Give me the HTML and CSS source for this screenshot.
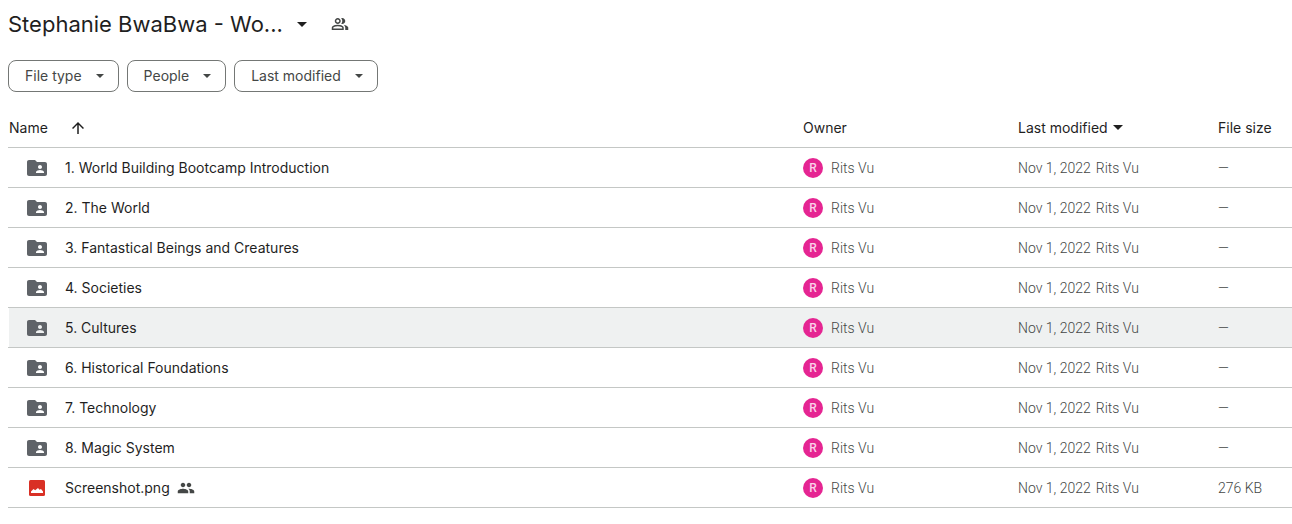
FILE: index.html
```html
<!DOCTYPE html>
<html lang="en">
<head>
<meta charset="utf-8">
<title>Stephanie BwaBwa</title>
<link rel="stylesheet" href="styles.css">
</head>
<body>
<svg class="sprite" aria-hidden="true">
  <symbol id="caret" viewBox="0 0 10 5"><path d="M0 0l5 5 5-5z"/></symbol>
  <symbol id="folder" viewBox="2 4 20 16"><path d="M20 6h-8l-2-2H4c-1.1 0-1.99.9-1.99 2L2 18c0 1.1.9 2 2 2h16c1.1 0 2-.9 2-2V8c0-1.1-.9-2-2-2zm-5 3c1.1 0 2 .9 2 2s-.9 2-2 2-2-.9-2-2 .9-2 2-2zm4 8h-8v-1c0-1.33 2.67-2 4-2s4 .67 4 2v1z"/></symbol>
</svg>
<header class="titlebar">
  <button class="title" type="button"><span>Stephanie BwaBwa - Wo...</span><svg class="caret-title"><use href="#caret"/></svg></button>
  <button class="share" type="button" aria-label="Shared">
    <svg class="people" viewBox="0 -960 960 960"><path d="M40-160v-112q0-34 17.500-62.500T104-378q62-31 126-46.500T360-440q66 0 130 15.500T616-378q29 15 46.500 43.500T680-272v112H40Zm720 0v-120q0-44-24.500-84.500T666-434q51 6 96 20.500t84 35.500q36 20 55 44.500t19 53.500v120H760ZM360-480q-66 0-113-47t-47-113q0-66 47-113t113-47q66 0 113 47t47 113q0 66-47 113t-113 47Zm400-160q0 66-47 113t-113 47q-11 0-28-2.500t-28-5.500q27-32 41.500-71t14.500-81q0-42-14.500-81T544-792q14-5 28-6.500t28-1.500q66 0 113 47t47 113ZM120-240h480v-32q0-11-5.500-20T580-306q-54-27-109-40.500T360-360q-56 0-111 13.500T140-306q-9 5-14.500 14t-5.500 20v32Zm240-320q33 0 56.500-23.500T440-640q0-33-23.500-56.500T360-720q-33 0-56.500 23.500T280-640q0 33 23.500 56.500T360-560Z"/></svg>
  </button>
</header>
<div class="filters">
  <button class="chip" type="button">File type<svg class="caret-chip"><use href="#caret"/></svg></button>
  <button class="chip" type="button">People<svg class="caret-chip"><use href="#caret"/></svg></button>
  <button class="chip" type="button">Last modified<svg class="caret-chip"><use href="#caret"/></svg></button>
</div>
<table class="files">
  <colgroup><col><col class="col-owner"><col class="col-modified"><col class="col-size"></colgroup>
  <thead>
    <tr>
      <th scope="col"><button class="sort sort-name" type="button">Name<svg class="arrow" viewBox="4 4 16 16"><path d="M4 12l1.410 1.410L11 7.830V20h2V7.830l5.580 5.590L20 12l-8-8-8 8z"/></svg></button></th>
      <th scope="col">Owner</th>
      <th scope="col"><button class="sort" type="button">Last modified<svg class="caret-head"><use href="#caret"/></svg></button></th>
      <th scope="col">File size</th>
    </tr>
  </thead>
  <tbody>
    <tr><td><div class="name"><svg class="folder"><use href="#folder"/></svg>1. World Building Bootcamp Introduction</div></td><td><div class="owner"><span class="avatar">R</span>Rits Vu</div></td><td><div class="modified"><span>Nov 1, 2022</span><span>Rits Vu</span></div></td><td>—</td></tr>
    <tr><td><div class="name"><svg class="folder"><use href="#folder"/></svg>2. The World</div></td><td><div class="owner"><span class="avatar">R</span>Rits Vu</div></td><td><div class="modified"><span>Nov 1, 2022</span><span>Rits Vu</span></div></td><td>—</td></tr>
    <tr><td><div class="name"><svg class="folder"><use href="#folder"/></svg>3. Fantastical Beings and Creatures</div></td><td><div class="owner"><span class="avatar">R</span>Rits Vu</div></td><td><div class="modified"><span>Nov 1, 2022</span><span>Rits Vu</span></div></td><td>—</td></tr>
    <tr><td><div class="name"><svg class="folder"><use href="#folder"/></svg>4. Societies</div></td><td><div class="owner"><span class="avatar">R</span>Rits Vu</div></td><td><div class="modified"><span>Nov 1, 2022</span><span>Rits Vu</span></div></td><td>—</td></tr>
    <tr class="active"><td><div class="name"><svg class="folder"><use href="#folder"/></svg>5. Cultures</div></td><td><div class="owner"><span class="avatar">R</span>Rits Vu</div></td><td><div class="modified"><span>Nov 1, 2022</span><span>Rits Vu</span></div></td><td>—</td></tr>
    <tr><td><div class="name"><svg class="folder"><use href="#folder"/></svg>6. Historical Foundations</div></td><td><div class="owner"><span class="avatar">R</span>Rits Vu</div></td><td><div class="modified"><span>Nov 1, 2022</span><span>Rits Vu</span></div></td><td>—</td></tr>
    <tr><td><div class="name"><svg class="folder"><use href="#folder"/></svg>7. Technology</div></td><td><div class="owner"><span class="avatar">R</span>Rits Vu</div></td><td><div class="modified"><span>Nov 1, 2022</span><span>Rits Vu</span></div></td><td>—</td></tr>
    <tr><td><div class="name"><svg class="folder"><use href="#folder"/></svg>8. Magic System</div></td><td><div class="owner"><span class="avatar">R</span>Rits Vu</div></td><td><div class="modified"><span>Nov 1, 2022</span><span>Rits Vu</span></div></td><td>—</td></tr>
    <tr><td><div class="name"><svg class="image" viewBox="-2 0 20 16"><rect width="16" height="16" rx="1.500" fill="#d93025"/><path d="M2 13v-1.500L4.500 9l1.700 1.200L9 8l1.500 1.800L12 9l2 2.500V13z" fill="#fff"/></svg>Screenshot.png<svg class="people" viewBox="0 0 24 24"><path d="M16 11c1.660 0 2.990-1.340 2.990-3S17.660 5 16 5s-3 1.340-3 3 1.340 3 3 3zm-8 0c1.660 0 2.990-1.340 2.990-3S9.660 5 8 5 5 6.340 5 8s1.340 3 3 3zm0 2c-2.330 0-7 1.170-7 3.500V19h14v-2.500c0-2.330-4.670-3.500-7-3.500zm8 0c-.29 0-.62.02-.97.05 1.160.84 1.970 1.970 1.970 3.450V19h6v-2.500c0-2.330-4.670-3.500-7-3.500z"/></svg></div></td><td><div class="owner"><span class="avatar">R</span>Rits Vu</div></td><td><div class="modified"><span>Nov 1, 2022</span><span>Rits Vu</span></div></td><td>276 KB</td></tr>
  </tbody>
</table>
</body>
</html>
```
FILE: styles.css
```css
* { box-sizing: border-box; }
body {
  margin: 0;
  padding: 8px 0 0 8px;
  background: #fff;
  color: #1f1f1f;
  font: 14px/20px Inter, Roboto, sans-serif;
}
svg { display: block; flex: none; fill: currentColor; }
button {
  margin: 0;
  padding: 0;
  border: 0;
  background: none;
  color: inherit;
  font: inherit;
  cursor: pointer;
}
.sprite { position: absolute; width: 0; height: 0; }

.titlebar { display: flex; align-items: center; gap: 24px; height: 32px; }
.title { display: flex; align-items: center; gap: 14px; font-size: 22px; line-height: 32px; }
.caret-title { width: 10px; height: 5px; }
.share { color: #444746; }
.people { width: 18px; height: 18px; color: #444746; }

.filters { display: flex; gap: 8px; margin: 20px 0 16px; }
.chip {
  display: flex;
  align-items: center;
  gap: 14px;
  height: 32px;
  padding: 0 14px 0 16px;
  border: 1px solid #747775;
  border-radius: 8px;
  color: #444746;
}
.caret-chip { width: 8px; height: 4px; }

.files { width: 100%; table-layout: fixed; border-collapse: separate; border-spacing: 0; }
.col-owner { width: 215px; }
.col-modified { width: 200px; }
.col-size { width: 75px; }
th, td {
  height: 40px;
  padding: 0 0 0 1px;
  border-bottom: 1px solid #c4c7c5;
  text-align: left;
  white-space: nowrap;
  vertical-align: middle;
}
th { font-weight: 400; }
td { color: #444746; font-family: Roboto, sans-serif; font-weight: 300; }
.sort { display: flex; align-items: center; gap: 5px; }
.sort-name { gap: 24px; }
.arrow { width: 12px; height: 12px; }
.caret-head { width: 10px; height: 5px; }
.name { display: flex; align-items: center; gap: 7px; padding-left: 18px; color: #1f1f1f; font-family: Inter, sans-serif; font-weight: 400; }
.folder, .image { width: 20px; height: 16px; margin-right: 11px; color: #5f6368; }
.owner { display: flex; align-items: center; gap: 8px; }
.avatar {
  width: 20px;
  border-radius: 50%;
  background: #e52592;
  color: #fbd0e8;
  font-size: 12px;
  font-weight: 500;
  line-height: 20px;
  text-align: center;
}
.modified { display: flex; gap: 5px; }
.active { background: #eff1f1; }
.active td:first-child { box-shadow: inset 1px 0 #fff; }
```
